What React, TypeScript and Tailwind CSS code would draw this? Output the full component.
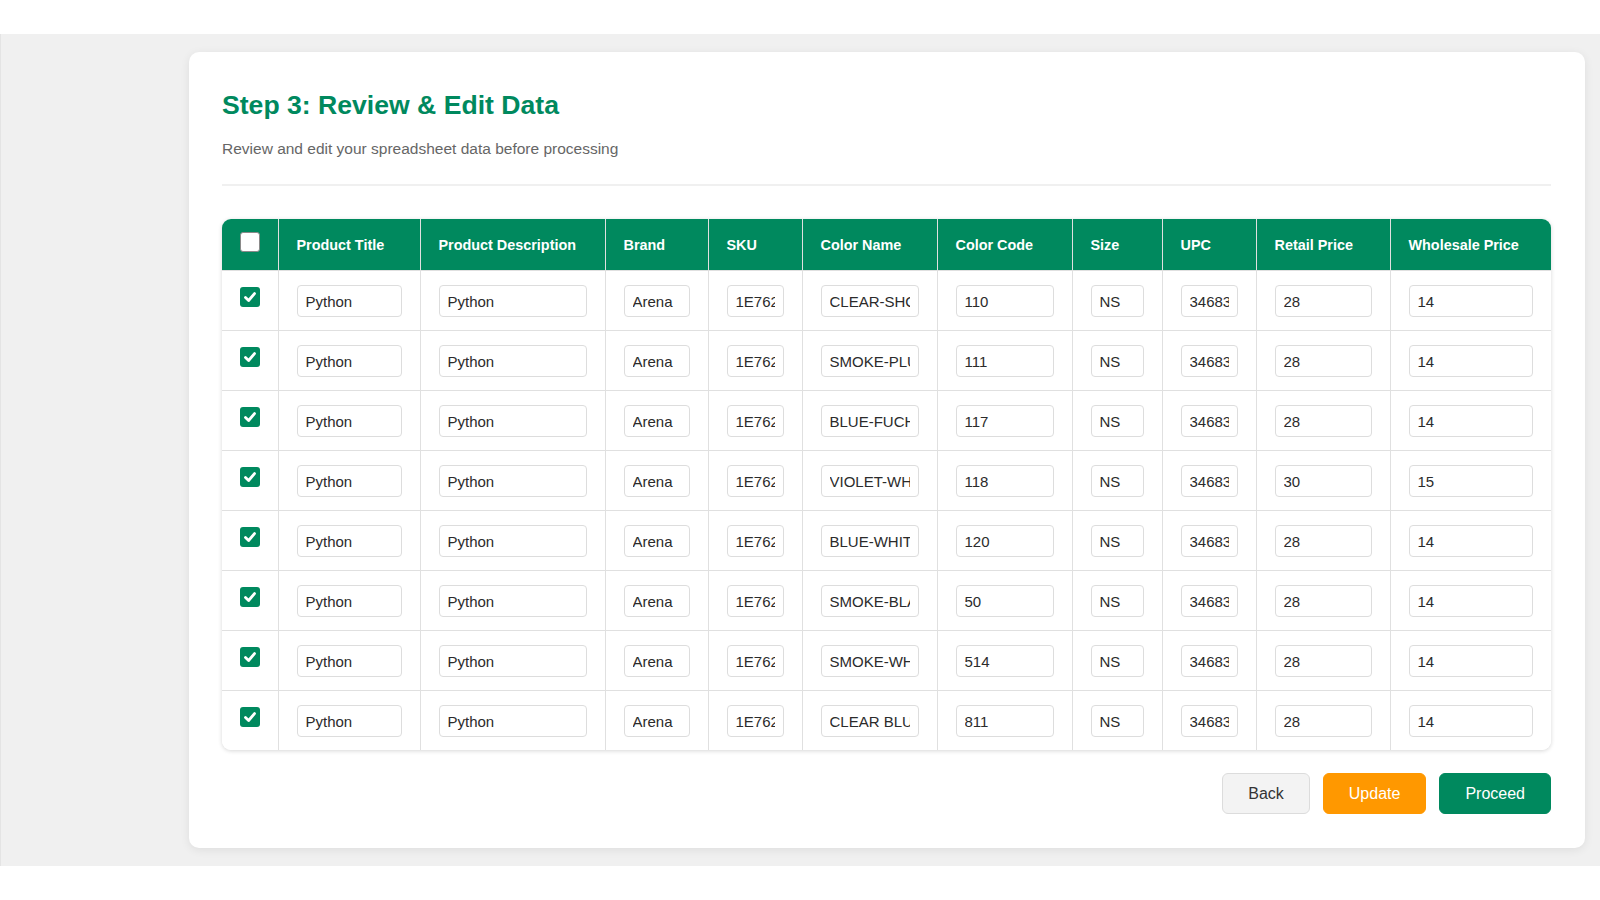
import React from 'react';

type Row = {
    colorName: string;
    colorCode: string;
    retail: string;
    wholesale: string;
};

const ROWS: Row[] = [
    { colorName: 'CLEAR-SHOCK', colorCode: '110', retail: '28', wholesale: '14' },
    { colorName: 'SMOKE-PLUM', colorCode: '111', retail: '28', wholesale: '14' },
    { colorName: 'BLUE-FUCHSIA', colorCode: '117', retail: '28', wholesale: '14' },
    { colorName: 'VIOLET-WHITE', colorCode: '118', retail: '30', wholesale: '15' },
    { colorName: 'BLUE-WHITE', colorCode: '120', retail: '28', wholesale: '14' },
    { colorName: 'SMOKE-BLACK', colorCode: '50', retail: '28', wholesale: '14' },
    { colorName: 'SMOKE-WHITE', colorCode: '514', retail: '28', wholesale: '14' },
    { colorName: 'CLEAR BLUE', colorCode: '811', retail: '28', wholesale: '14' },
];

const COLUMNS = [
    { label: 'Product Title', width: 'w-[142px]' },
    { label: 'Product Description', width: 'w-[185px]' },
    { label: 'Brand', width: 'w-[103px]' },
    { label: 'SKU', width: 'w-[94px]' },
    { label: 'Color Name', width: 'w-[135px]' },
    { label: 'Color Code', width: 'w-[135px]' },
    { label: 'Size', width: 'w-[90px]' },
    { label: 'UPC', width: 'w-[94px]' },
    { label: 'Retail Price', width: 'w-[134px]' },
    { label: 'Wholesale Price', width: 'w-[161px]' },
];

const Checkbox: React.FC<{ checked: boolean }> = ({ checked }) =>
    checked ? (
        <span className="flex w-[20px] h-[20px] rounded-[3px] bg-[#00895e] items-center justify-center">
            <svg width="14" height="14" viewBox="0 0 14 14" fill="none">
                <polyline points="2.5 7.5 5.6 10.5 11.5 3.6" stroke="white" strokeWidth="2.8" strokeLinecap="round" strokeLinejoin="round" />
            </svg>
        </span>
    ) : (
        <span className="block w-[20px] h-[20px] rounded-[3px] bg-white border border-[#8a8a8a]" />
    );

const Cell: React.FC<{ value: string; last?: boolean }> = ({ value, last }) => (
    <td className={`px-[18px] pt-[14px] pb-[13px] align-top border-l border-[#e0e0e0] ${last ? '' : 'border-b'}`}>
        <input
            type="text"
            defaultValue={value}
            className="block w-full h-[32px] px-2 rounded-[4px] border border-[#dddddd] bg-white text-[15px] text-[#2b2b2b] outline-none"
        />
    </td>
);

export default function App() {
    return (
        <div className="font-['Liberation_Sans',Arial,sans-serif] bg-white">
            <div className="h-[34px] bg-white" />
            <div className="relative overflow-hidden bg-[#f0f0f0] border-l border-[#e4e4e4] pl-[188px] pr-[15px] py-[18px]">
                <div className="bg-white rounded-[10px] shadow-[0_2px_10px_rgba(0,0,0,0.08)] pl-[33px] pr-[34px] pt-[37px] pb-[34px]">
                    <div className="border-b-2 border-[#f0f0f0] pb-[24px] mb-[33px]">
                        <h2 className="text-[26.6px] leading-[32px] font-bold text-[#00895e]">Step 3: Review &amp; Edit Data</h2>
                        <p className="mt-[17px] text-[15.5px] leading-[22px] text-[#666]">
                            Review and edit your spreadsheet data before processing
                        </p>
                    </div>

                    <div className="rounded-[9px] overflow-hidden shadow-[0_1px_4px_rgba(0,0,0,0.16)]">
                        <table className="w-full table-fixed border-collapse">
                            <thead>
                                <tr className="bg-[#00895e]">
                                    <th className="w-[56px] px-[18px] pt-[13px] align-top border-b border-[#e0e0e0]">
                                        <Checkbox checked={false} />
                                    </th>
                                    {COLUMNS.map(col => (
                                        <th
                                            key={col.label}
                                            className={`${col.width} px-[18px] py-[15.5px] text-left text-[14.4px] leading-[20px] font-bold text-white whitespace-nowrap border-l border-b border-[#e0e0e0]`}
                                        >
                                            {col.label}
                                        </th>
                                    ))}
                                </tr>
                            </thead>
                            <tbody>
                                {ROWS.map((row, i) => {
                                    const last = i === ROWS.length - 1;
                                    return (
                                        <tr key={i} className="bg-white">
                                            <td className={`px-[18px] pt-[16px] align-top border-[#e0e0e0] ${last ? '' : 'border-b'}`}>
                                                <Checkbox checked />
                                            </td>
                                            <Cell value="Python" last={last} />
                                            <Cell value="Python" last={last} />
                                            <Cell value="Arena" last={last} />
                                            <Cell value="1E7623" last={last} />
                                            <Cell value={row.colorName} last={last} />
                                            <Cell value={row.colorCode} last={last} />
                                            <Cell value="NS" last={last} />
                                            <Cell value="346830" last={last} />
                                            <Cell value={row.retail} last={last} />
                                            <Cell value={row.wholesale} last={last} />
                                        </tr>
                                    );
                                })}
                            </tbody>
                        </table>
                    </div>

                    <div className="flex justify-end gap-[13px] mt-[23px]">
                        <button className="px-[25px] py-[10px] text-[16px] leading-[19px] rounded-[6px] border border-[#dcdcdc] bg-[#f3f3f3] text-[#333]">
                            Back
                        </button>
                        <button className="px-[25px] py-[10px] text-[16px] leading-[19px] rounded-[6px] border border-[#ff9800] bg-[#ff9800] text-white">
                            Update
                        </button>
                        <button className="px-[25px] py-[10px] text-[16px] leading-[19px] rounded-[6px] border border-[#00895e] bg-[#00895e] text-white">
                            Proceed
                        </button>
                    </div>
                </div>
                <div className="absolute left-[1591px] top-[855px] w-[30px] h-[30px] rounded-full bg-[#1c1c1c]" />
            </div>
        </div>
    );
}
